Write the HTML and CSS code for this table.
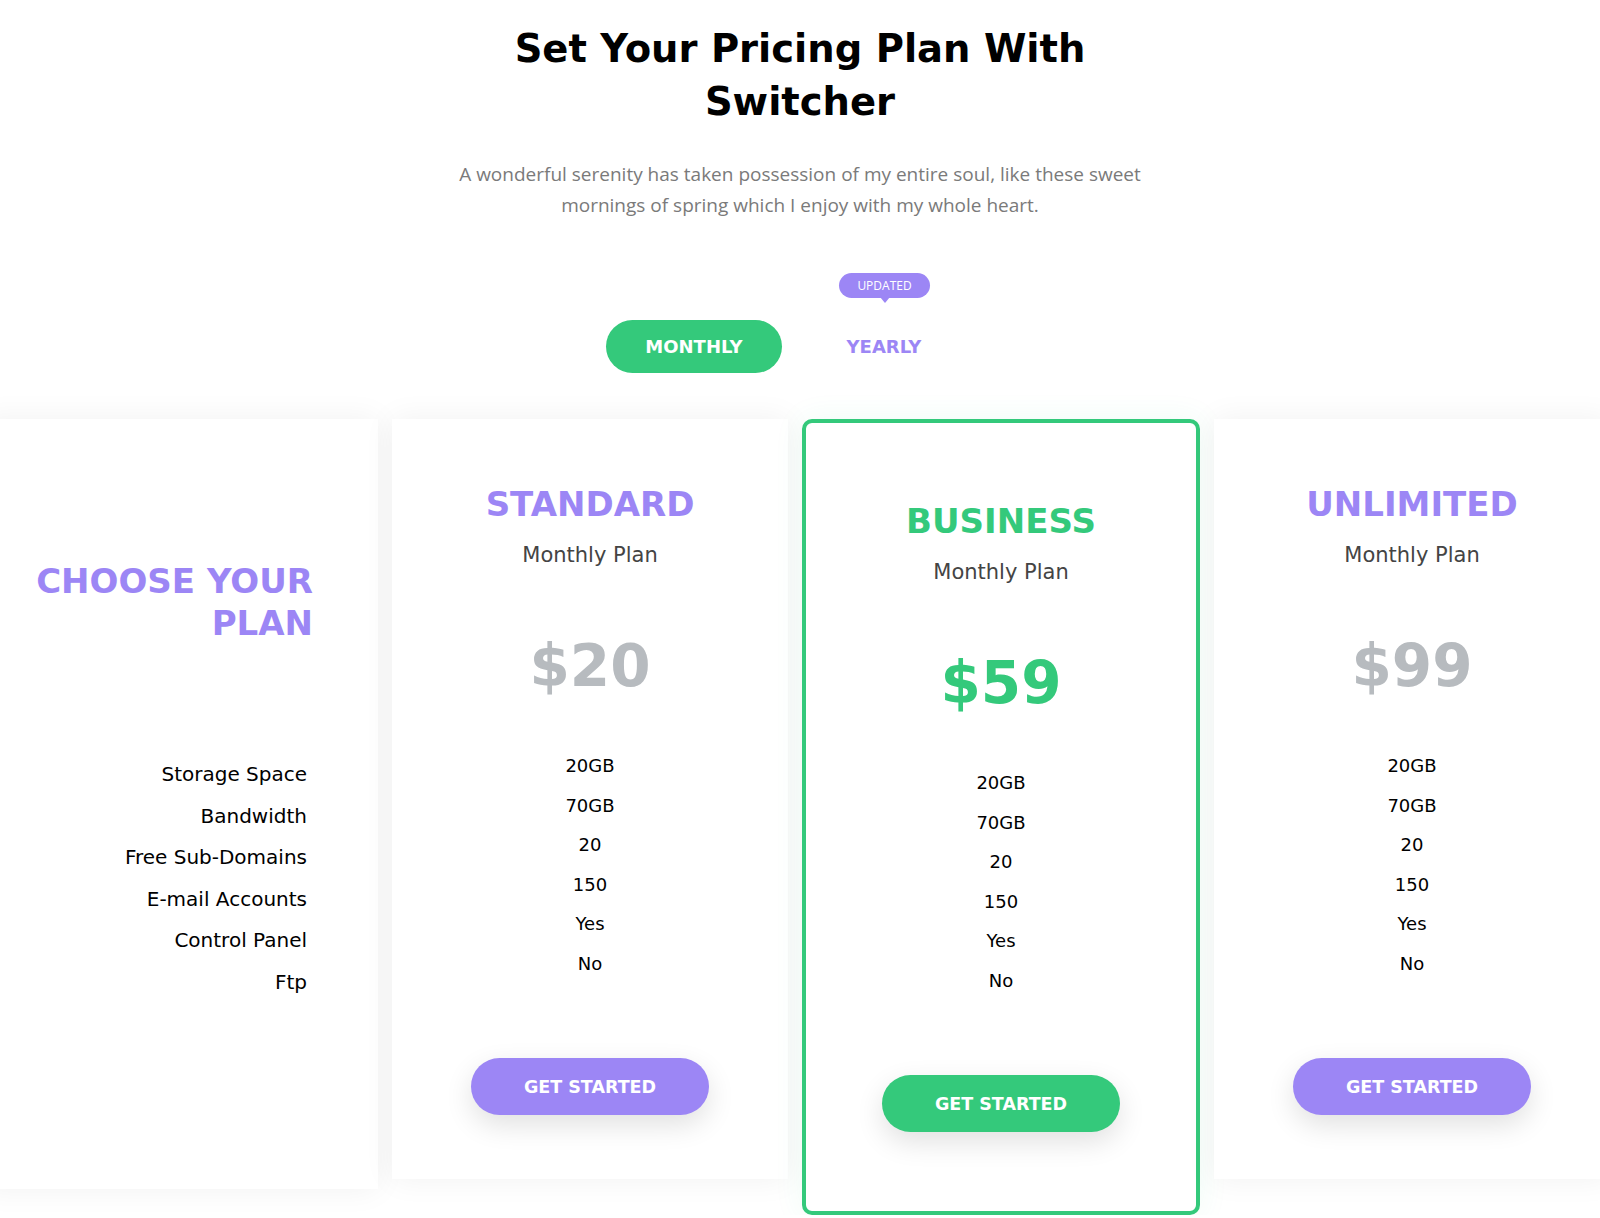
FILE: index.html
```html
<!DOCTYPE html>
<html lang="en">
<head>
    <meta charset="UTF-8">
    <meta name="viewport" content="width=device-width, initial-scale=1.0">
    <title>Pricing Plan Switcher</title>
    <link rel="stylesheet" href="styles.css">
</head>
<body>
    <section class="pricing">
        <h1 class="pricing-title">Set Your Pricing Plan With<br>Switcher</h1>
        <p class="pricing-intro">A wonderful serenity has taken possession of my entire soul, like these sweet mornings of spring which I enjoy with my whole heart.</p>

        <div class="switcher">
            <button class="switch-btn active">MONTHLY</button>
            <button class="switch-btn">YEARLY<span class="badge">UPDATED</span></button>
        </div>

        <div class="plans">
            <div class="plan-card plan-labels">
                <h2 class="labels-title">CHOOSE YOUR<br>PLAN</h2>
                <ul class="labels-list">
                    <li>Storage Space</li>
                    <li>Bandwidth</li>
                    <li>Free Sub-Domains</li>
                    <li>E-mail Accounts</li>
                    <li>Control Panel</li>
                    <li>Ftp</li>
                </ul>
            </div>

            <div class="plan-card">
                <h3 class="plan-name">STANDARD</h3>
                <p class="plan-term">Monthly Plan</p>
                <div class="plan-price">$20</div>
                <ul class="plan-features">
                    <li>20GB</li>
                    <li>70GB</li>
                    <li>20</li>
                    <li>150</li>
                    <li>Yes</li>
                    <li>No</li>
                </ul>
                <button class="plan-btn">GET STARTED</button>
            </div>

            <div class="plan-card featured">
                <h3 class="plan-name">BUSINESS</h3>
                <p class="plan-term">Monthly Plan</p>
                <div class="plan-price">$59</div>
                <ul class="plan-features">
                    <li>20GB</li>
                    <li>70GB</li>
                    <li>20</li>
                    <li>150</li>
                    <li>Yes</li>
                    <li>No</li>
                </ul>
                <button class="plan-btn">GET STARTED</button>
            </div>

            <div class="plan-card">
                <h3 class="plan-name">UNLIMITED</h3>
                <p class="plan-term">Monthly Plan</p>
                <div class="plan-price">$99</div>
                <ul class="plan-features">
                    <li>20GB</li>
                    <li>70GB</li>
                    <li>20</li>
                    <li>150</li>
                    <li>Yes</li>
                    <li>No</li>
                </ul>
                <button class="plan-btn">GET STARTED</button>
            </div>
        </div>
    </section>
</body>
</html>
```

FILE: styles.css
```css
body {
    margin: 0;
    background: #ffffff;
    color: #000000;
    font-family: "DejaVu Sans", sans-serif;
    overflow-x: hidden;
}

.pricing {
    padding-top: 22px;
    text-align: center;
}

.pricing-title {
    margin: 0;
    font-size: 38.5px;
    line-height: 53px;
    font-weight: 700;
}

.pricing-intro {
    max-width: 740px;
    margin: 31px auto 0;
    font-family: "Open Sans", sans-serif;
    font-size: 19px;
    line-height: 31px;
    color: #7a7a7a;
}

/* monthly / yearly toggle */
.switcher {
    display: flex;
    gap: 14px;
    width: 388px;
    margin: 99px auto 0;
}

.switch-btn {
    position: relative;
    width: 176px;
    height: 53px;
    border: none;
    border-radius: 27px;
    background: transparent;
    color: #9c86f5;
    font-family: "DejaVu Sans", sans-serif;
    font-size: 18px;
    font-weight: 700;
    cursor: pointer;
}

.switch-btn.active {
    background: #34c97b;
    color: #ffffff;
}

.badge {
    position: absolute;
    top: -47px;
    left: 50%;
    width: 91px;
    height: 25px;
    margin-left: -45px;
    border-radius: 13px;
    background: #9c86f5;
    color: #ffffff;
    font-family: "Open Sans", sans-serif;
    font-size: 12px;
    font-weight: 400;
    line-height: 25px;
}

.badge::after {
    content: "";
    position: absolute;
    left: 50%;
    bottom: -5px;
    margin-left: -5px;
    border-left: 5px solid transparent;
    border-right: 5px solid transparent;
    border-top: 6px solid #9c86f5;
}

/* plan cards */
.plans {
    display: grid;
    grid-template-columns: 396px 396px 398px 396px;
    column-gap: 14px;
    align-items: start;
    margin: 46px 0 0 -18px;
}

.plan-card {
    background: #ffffff;
    padding: 65px 30px 64px;
    box-shadow: 0 0 30px rgba(0, 0, 0, 0.06);
}

.plan-labels {
    padding: 141px 65px 186px 30px;
    text-align: right;
}

.labels-title {
    margin: 0;
    font-size: 34px;
    line-height: 42px;
    font-weight: 700;
    color: #9c86f5;
}

.labels-list {
    list-style: none;
    margin: 110px 6px 0 0;
    padding: 0;
    font-size: 20px;
    line-height: 41.5px;
    color: #000000;
}

.plan-name {
    margin: 0;
    font-size: 34px;
    line-height: 40px;
    font-weight: 700;
    color: #9c86f5;
}

.plan-term {
    margin: 17px 0 0;
    font-size: 21px;
    line-height: 28px;
    color: #444444;
}

.plan-price {
    margin-top: 62px;
    font-size: 58px;
    line-height: 70px;
    font-weight: 700;
    color: #b7bbbf;
}

.plan-features {
    list-style: none;
    margin: 45px 0 0;
    padding: 0;
    font-size: 18px;
    line-height: 39.5px;
}

.plan-btn {
    width: 238px;
    height: 57px;
    margin-top: 75px;
    border: none;
    border-radius: 29px;
    background: #9c86f5;
    color: #ffffff;
    font-family: "DejaVu Sans", sans-serif;
    font-size: 17.5px;
    font-weight: 700;
    box-shadow: 0 10px 28px rgba(0, 0, 0, 0.12);
    cursor: pointer;
}

.featured {
    padding: 78px 30px 79px;
    border: 4px solid #34c97b;
    border-radius: 10px;
    box-shadow: 0 0 30px rgba(52, 201, 123, 0.08);
}

.featured .plan-name,
.featured .plan-price {
    color: #34c97b;
}

.featured .plan-btn {
    background: #34c97b;
}
```
